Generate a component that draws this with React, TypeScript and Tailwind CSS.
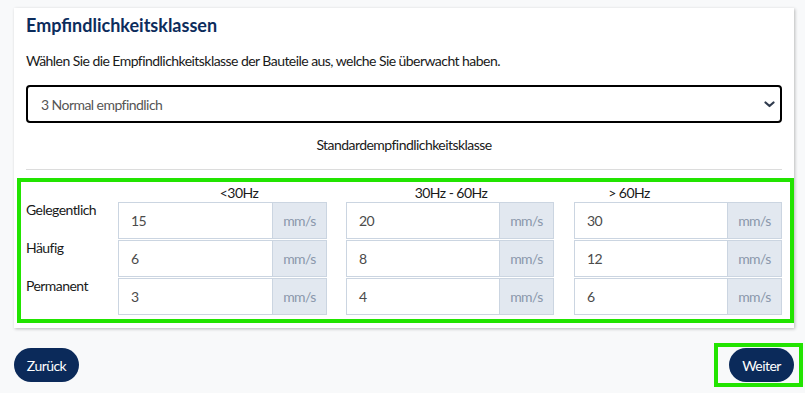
import React from "react";

const rows = [
  { label: "Gelegentlich", values: ["15", "20", "30"] },
  { label: "Häufig", values: ["6", "8", "12"] },
  { label: "Permanent", values: ["3", "4", "6"] },
];

function Group({ value, className }: { value: string; className: string }) {
  return (
    <div className={`flex h-[37px] ${className}`}>
      <div className="flex-1 flex items-center pl-3 bg-white border border-[#cbd5e1] text-[14px] text-[#4b4b4b]">
        {value}
      </div>
      <div className="w-[55px] -ml-px flex items-center justify-center bg-[#e2e8f0] border border-[#cbd5e1] text-[14px] text-[#8a97ab]">
        mm/s
      </div>
    </div>
  );
}

export default function App() {
  return (
    <div
      className="w-[805px] h-[393px] bg-[#f8f9fa] pt-2 pl-[14px] pr-[2px] overflow-hidden tracking-[-0.55px]"
      style={{ fontFamily: "Lato, 'Open Sans', sans-serif" }}
    >
      <div className="w-[780px] bg-white shadow-[1px_1px_3px_rgba(0,0,0,0.25)] pt-[3px] px-3 pb-[5px]">
        <h1 className="text-[18px] leading-7 font-bold text-[#0c2c5c] tracking-normal">Empfindlichkeitsklassen</h1>
        <p className="mt-3 text-[14px] leading-5 text-[#1a1a1a]">
          Wählen Sie die Empfindlichkeitsklasse der Bauteile aus, welche Sie überwacht haben.
        </p>
        <div className="mt-[14px] h-[38px] border-2 border-black rounded-[4px] flex items-center justify-between pl-[13px] pr-[5px]">
          <span className="text-[14px] text-[#555]">3 Normal empfindlich</span>
          <svg width="11" height="7" viewBox="0 0 11 7">
            <path d="M1.5 1.5 L5.5 5 L9.5 1.5" fill="none" stroke="#2f3a4d" strokeWidth="2.2" strokeLinecap="round" strokeLinejoin="round" />
          </svg>
        </div>
        <p className="mt-3 text-center text-[14px] leading-5 text-[#1a1a1a]">Standardempfindlichkeitsklasse</p>
        <div className="mt-[14px] h-px bg-[#dcdcdc]" />
        <div className="mt-2 -ml-[9px] -mr-[12px] border-4 border-[#22e400] pl-[5px] pb-[4px]">
          <div className="flex h-[20px] items-center text-[14px] text-[#1a1a1a]">
            <div className="w-[92px]" />
            <div className="w-[242px] text-center">&lt;30Hz</div>
            <div className="w-[182px] text-center">30Hz - 60Hz</div>
            <div className="w-[174px] text-center">&gt; 60Hz</div>
          </div>
          <div className="flex flex-col gap-px">
            {rows.map((r) => (
              <div key={r.label} className="flex">
                <div className="w-[92px] text-[14px] leading-5 -mt-[2px] text-[#1a1a1a]">{r.label}</div>
                <Group value={r.values[0]} className="w-[209px]" />
                <Group value={r.values[1]} className="w-[208px] ml-[19px]" />
                <Group value={r.values[2]} className="w-[208px] ml-[20px]" />
              </div>
            ))}
          </div>
        </div>
      </div>
      <div className="mt-[15px] flex items-center justify-between">
        <button className="h-[34px] w-[65px] rounded-full bg-[#0b2a5a] text-white text-[14px]">Zurück</button>
        <div className="border-4 border-[#22e400] pl-[11px] pr-[5px] py-[1px]">
          <button className="h-[34px] w-[65px] rounded-full bg-[#0b2a5a] text-white text-[14px]">Weiter</button>
        </div>
      </div>
    </div>
  );
}
